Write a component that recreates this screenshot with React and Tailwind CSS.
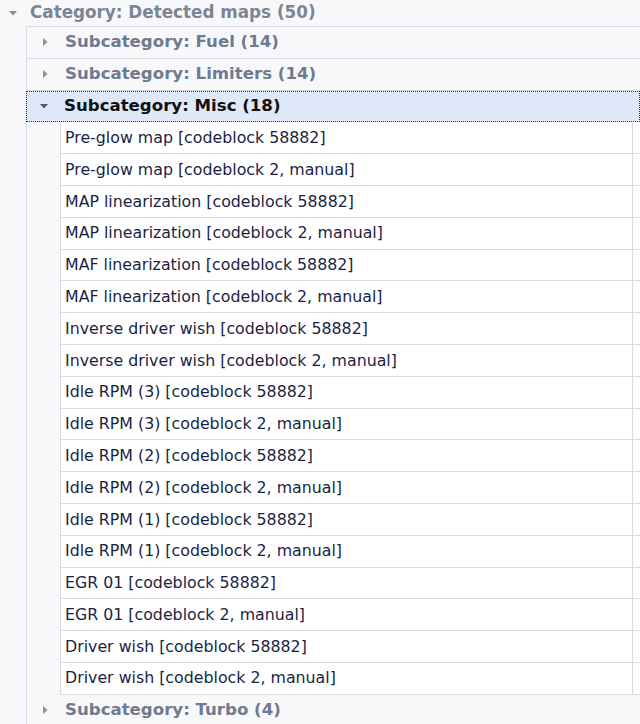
import React from 'react';

const items = [
  'Pre-glow map [codeblock 58882]',
  'Pre-glow map [codeblock 2, manual]',
  'MAP linearization [codeblock 58882]',
  'MAP linearization [codeblock 2, manual]',
  'MAF linearization [codeblock 58882]',
  'MAF linearization [codeblock 2, manual]',
  'Inverse driver wish [codeblock 58882]',
  'Inverse driver wish [codeblock 2, manual]',
  'Idle RPM (3) [codeblock 58882]',
  'Idle RPM (3) [codeblock 2, manual]',
  'Idle RPM (2) [codeblock 58882]',
  'Idle RPM (2) [codeblock 2, manual]',
  'Idle RPM (1) [codeblock 58882]',
  'Idle RPM (1) [codeblock 2, manual]',
  'EGR 01 [codeblock 58882]',
  'EGR 01 [codeblock 2, manual]',
  'Driver wish [codeblock 58882]',
  'Driver wish [codeblock 2, manual]',
];

function Arrow({ open, dark }) {
  const color = dark ? '#555a63' : '#8a8e96';
  return (
    <svg width="10" height="10" viewBox="0 0 10 10" className="shrink-0">
      {open ? (
        <path d="M1 3 L9 3 L5 7.5 Z" fill={color} />
      ) : (
        <path d="M3 1 L7.5 5 L3 9 Z" fill={color} />
      )}
    </svg>
  );
}

function SubRow({ label }) {
  return (
    <div className="h-[31.8px] flex items-center border-b border-[#d9dae2] bg-[#f8f8fa]">
      <div className="w-[34px] flex justify-center pl-[1px]">
        <Arrow />
      </div>
      <span className="pl-[4px] font-bold text-[16.6px] text-[#6e7b8f]">{label}</span>
    </div>
  );
}

export default function App() {
  return (
    <div
      className="w-[640px] h-[724px] overflow-hidden bg-[#f8f8fa] text-[15.8px]"
      style={{ fontFamily: '"DejaVu Sans", Verdana, sans-serif' }}
    >
      <div className="h-[26px] flex items-center -mt-[6px] pt-[6px] box-content">
        <div className="w-[26px] flex justify-center">
          <Arrow open />
        </div>
        <span className="pl-[4px] font-bold text-[16.8px] text-[#7b8596]">Category: Detected maps (50)</span>
      </div>
      <div className="ml-[26px] border-l border-t border-[#d9dae2]">
        <SubRow label="Subcategory: Fuel (14)" />
        <SubRow label="Subcategory: Limiters (14)" />
        <div className="h-[31.8px] flex items-center bg-[#dfe8f8] border border-dotted border-[#333] -ml-px">
          <div className="w-[34px] flex justify-center">
            <Arrow open dark />
          </div>
          <span className="pl-[3px] font-bold text-[16.6px] text-[#111]">Subcategory: Misc (18)</span>
        </div>
        <div className="flex">
          <div className="w-[33px] shrink-0" />
          <div className="flex-1 border-l border-[#d9dae2] bg-white">
            {items.map((t) => (
              <div key={t} className="h-[31.8px] flex border-b border-[#d9dae2]">
                <div className="w-[572px] flex items-center pl-[4px] border-r border-[#d9dae2] text-[#1b1f45]">
                  {t}
                </div>
              </div>
            ))}
          </div>
        </div>
        <SubRow label="Subcategory: Turbo (4)" />
      </div>
    </div>
  );
}
